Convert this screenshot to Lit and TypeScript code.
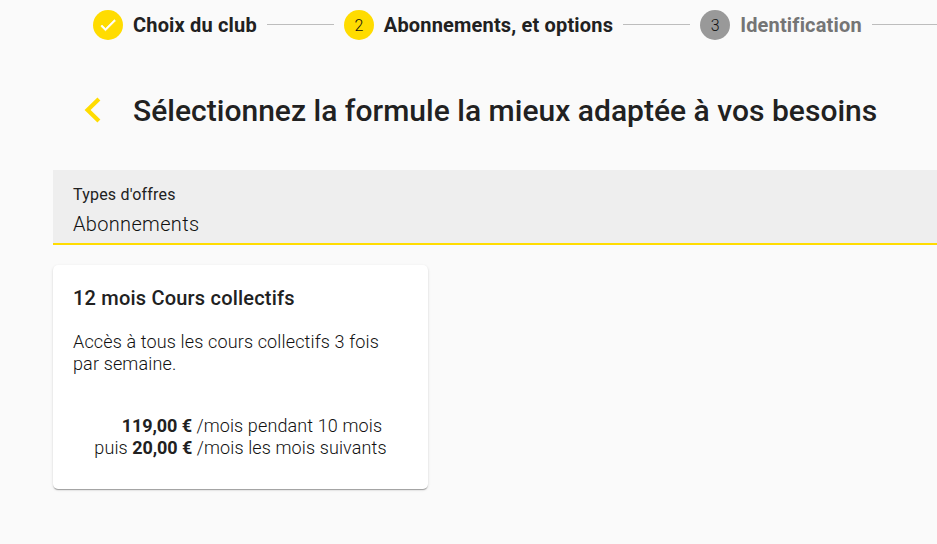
import { LitElement, html, css } from "lit";
import { customElement } from "lit/decorators.js";

@customElement("app-root")
export class AppRoot extends LitElement {
  static styles = css`
    :host { display: block; height: 544px; overflow: hidden; background: #fafafa; color: #212121; font-family: Roboto, sans-serif; }
    .stepper { display: flex; align-items: center; height: 50px; padding-left: 93px; font-size: 20px; font-weight: 700; letter-spacing: .17px; white-space: nowrap; }
    .badge { flex: none; width: 30px; height: 30px; border-radius: 50%; background: #ffdc00; display: flex; align-items: center; justify-content: center; font-size: 16px; font-weight: 300; letter-spacing: 0; margin-right: 10px; color: #111; }
    .off { background: #999; }
    .muted { color: #757575; }
    .line { flex: none; height: 1px; width: 67px; margin: 0 10px 1px; background: #bdbdbd; }
    .head { display: flex; align-items: center; height: 40px; margin-top: 40px; padding-left: 80px; }
    .back { display: block; width: 26px; height: 40px; margin-right: 27px; }
    h1 { margin: 0; padding-top: 2px; font-size: 30px; font-weight: 500; line-height: 40px; letter-spacing: .02px; white-space: nowrap; }
    .select { box-sizing: border-box; margin: 40px 0 0 53px; height: 75px; padding: 15px 20px 0; background: #eee; border-bottom: 2px solid #ffdc00; }
    .label { font-size: 16px; line-height: 20px; letter-spacing: .2px; }
    .value { font-size: 20px; font-weight: 300; line-height: 24px; margin-top: 7px; letter-spacing: .33px; color: #111; }
    .card { box-sizing: border-box; width: 375px; height: 224px; margin: 20px 0 0 53px; padding: 21px 20px; background: #fff; border-radius: 5px; box-shadow: 0 2px 1px -1px rgba(0,0,0,.2), 0 1px 1px rgba(0,0,0,.14), 0 1px 3px rgba(0,0,0,.12); }
    h2 { margin: 0; font-size: 20px; line-height: 24px; font-weight: 500; letter-spacing: .2px; }
    p { margin: 21px 25px 0 0; font-size: 18px; font-weight: 300; line-height: 22px; letter-spacing: .14px; color: #111; }
    .price { margin-top: 40px; text-align: center; font-size: 18px; font-weight: 300; line-height: 22px; letter-spacing: .12px; white-space: nowrap; color: #111; }
    .price b { font-weight: 700; letter-spacing: -.1px; color: #212121; }
    .first { padding-left: 23px; }
  `;
  render() {
    return html`
      <nav class="stepper">
        <span class="badge"><svg width="20" height="20" viewBox="0 0 24 24"><path fill="#fff" stroke="#fff" stroke-width=".8" d="M9 16.17 4.83 12l-1.42 1.41L9 19 21 7l-1.41-1.41z"/></svg></span><span>Choix du club</span>
        <span class="line"></span>
        <span class="badge">2</span><span>Abonnements, et options</span>
        <span class="line"></span>
        <span class="badge off">3</span><span class="muted">Identification</span>
        <span class="line"></span>
      </nav>
      <header class="head">
        <svg class="back" viewBox="0 0 26 40"><path d="M18.9 9.1 7.6 20l11.3 10.9" fill="none" stroke="#ffdc00" stroke-width="4.2"/></svg>
        <h1>Sélectionnez la formule la mieux adaptée à vos besoins</h1>
      </header>
      <section class="select"><div class="label">Types d'offres</div><div class="value">Abonnements</div></section>
      <article class="card">
        <h2>12 mois Cours collectifs</h2>
        <p>Accès à tous les cours collectifs 3 fois par semaine.</p>
        <div class="price"><div class="first"><b>119,00 €</b> /mois pendant 10 mois</div><div>puis <b>20,00 €</b> /mois les mois suivants</div></div>
      </article>`;
  }
}
